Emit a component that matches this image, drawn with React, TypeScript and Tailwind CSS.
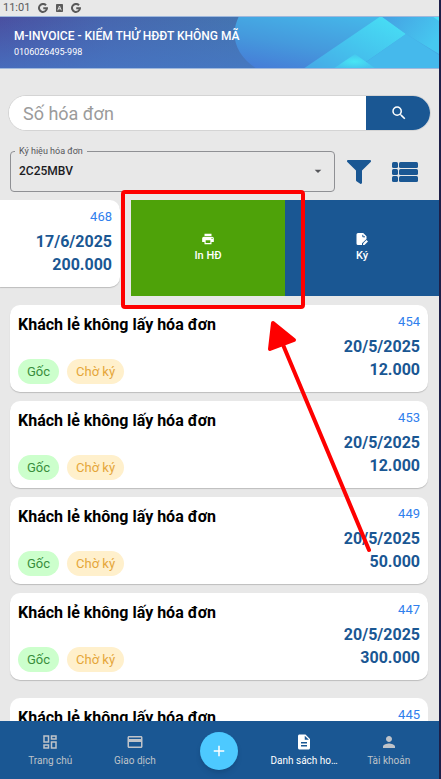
import React from 'react';
import { FaFilter } from 'react-icons/fa';
import {
  MdAdd,
  MdArrowDropDown,
  MdDescription,
  MdOutlineDashboard,
  MdPayment,
  MdPerson,
  MdPrint,
  MdSearch,
} from 'react-icons/md';

type Invoice = { no: string; customer: string; date: string; amount: string };

const customer = 'Khách lẻ không lấy hóa đơn';

const invoices: Invoice[] = [
  { no: '454', customer, date: '20/5/2025', amount: '12.000' },
  { no: '453', customer, date: '20/5/2025', amount: '12.000' },
  { no: '449', customer, date: '20/5/2025', amount: '50.000' },
  { no: '447', customer, date: '20/5/2025', amount: '300.000' },
];

function GoogleMark() {
  return (
    <svg viewBox="0 0 20 20" className="size-[10px]" fill="none" stroke="#5a5a5a" strokeWidth="4" aria-hidden="true">
      <path d="M16 4.5A8 8 0 1 0 18 10.5H10.500" />
    </svg>
  );
}

function StatusBar() {
  return (
    <div className="flex h-4 shrink-0 items-center pl-[3px] text-[11px] leading-4 text-[#5a5a5a]">
      <span className="mr-2">11:01</span>
      <span className="flex items-center gap-2">
        <GoogleMark />
        <svg viewBox="0 0 14 16" className="h-2 w-[7px]" aria-hidden="true">
          <rect width="14" height="16" rx="1.500" fill="#5a5a5a" />
          <path d="M3.500 12.500 7 4l3.500 8.500M5 9.500h4" fill="none" stroke="#e8e8e8" strokeWidth="1.800" />
        </svg>
        <GoogleMark />
      </span>
    </div>
  );
}

function HeaderArt() {
  return (
    <svg viewBox="0 0 439 53" preserveAspectRatio="none" className="absolute inset-0 size-full" aria-hidden="true">
      <defs>
        <linearGradient id="base" x1="0" y1="0" x2="1" y2="0">
          <stop offset="0" stopColor="#4a4fa0" />
          <stop offset="0.250" stopColor="#4766ae" />
          <stop offset="0.550" stopColor="#4474b0" />
        </linearGradient>
        <linearGradient id="glow" x1="0" y1="0" x2="0" y2="1">
          <stop offset="0" stopColor="#4679c8" stopOpacity="0" />
          <stop offset="1" stopColor="#4679c8" stopOpacity="0.700" />
        </linearGradient>
        <linearGradient id="disc" x1="0" y1="1" x2="0.700" y2="0">
          <stop offset="0" stopColor="#4678d6" />
          <stop offset="0.450" stopColor="#459add" />
          <stop offset="1" stopColor="#45b9ea" />
        </linearGradient>
        <linearGradient id="beam" x1="0" y1="1" x2="1" y2="0">
          <stop offset="0" stopColor="#45a8e6" />
          <stop offset="0.500" stopColor="#45c6ee" />
          <stop offset="1" stopColor="#48e2f6" />
        </linearGradient>
        <linearGradient id="edge" x1="0" y1="0" x2="1" y2="0.500">
          <stop offset="0" stopColor="#459fe2" />
          <stop offset="1" stopColor="#46c8f0" />
        </linearGradient>
        <radialGradient id="peak">
          <stop offset="0" stopColor="#48e6f4" />
          <stop offset="1" stopColor="#45c4ee" />
        </radialGradient>
      </defs>
      <rect width="439" height="53" fill="url(#base)" />
      <rect width="280" height="53" fill="url(#glow)" />
      <path d="M239 0C230 18 234 38 257 53H439V0Z" fill="url(#disc)" />
      <path d="M303 53 381 0 406 18 356 53Z" fill="url(#beam)" />
      <path d="M381 0H439V38L406 18Z" fill="url(#edge)" />
      <path d="M406 18 439 39V53H356Z" fill="#45b9ec" />
      <path d="M432 0H439V5Z" fill="#48e2f6" />
      <path d="M333 53 355 38 376 53Z" fill="url(#peak)" />
      <path d="M0 0.500H439M0 52.500H439" stroke="#9fb8dc" strokeWidth="1" />
    </svg>
  );
}

function Header() {
  return (
    <header className="relative h-[53px] shrink-0">
      <HeaderArt />
      <div className="relative pt-3 pl-[14px] text-white">
        <h1 className="text-[12px] leading-4 font-medium">M-INVOICE - KIỂM THỬ HĐĐT KHÔNG MÃ</h1>
        <p className="text-[9px] leading-4">0106026495-998</p>
      </div>
    </header>
  );
}

function SearchBar() {
  return (
    <form className="mr-2 ml-2 flex h-9 shrink-0 overflow-hidden rounded-full border border-[#d4d4d4] bg-white" onSubmit={(e) => e.preventDefault()}>
      <input
        type="text"
        aria-label="Số hóa đơn"
        placeholder="Số hóa đơn"
        className="min-w-0 flex-1 bg-white pl-[14px] text-[18px] outline-none placeholder:text-[#9b9b9b]"
      />
      <button type="submit" aria-label="Tìm kiếm" className="-my-px -mr-px flex w-[65px] items-center justify-center bg-[#1a5793] text-white">
        <MdSearch className="size-[18px]" />
      </button>
    </form>
  );
}

function Filters() {
  return (
    <div className="mt-[15px] flex shrink-0 items-end pr-[21px] pl-[10px]">
      <fieldset className="relative h-[46px] min-w-0 flex-1 rounded-[4px] border border-[#8f9094] px-1">
        <legend className="px-1 text-[9px] leading-[10px] text-[#55565a]">
          <label htmlFor="series">Ký hiệu hóa đơn</label>
        </legend>
        <select
          id="series"
          defaultValue="2C25MBV"
          className="h-[30px] w-full appearance-none bg-transparent pl-1 text-[12px] font-medium text-[#1b1b1f] outline-none"
        >
          <option>2C25MBV</option>
        </select>
        <MdArrowDropDown className="pointer-events-none absolute top-[7px] right-2 size-4 text-[#55565a]" aria-hidden="true" />
      </fieldset>
      <button type="button" aria-label="Lọc" className="mb-2 ml-3 text-[#1a5793]">
        <FaFilter className="size-6" />
      </button>
      <button type="button" aria-label="Danh sách" className="mb-2 ml-[21px] text-[#1a5793]">
        <svg viewBox="0 0 26 24" className="h-6 w-[26px]" fill="currentColor" aria-hidden="true">
          <rect x="0" y="2" width="6" height="6" rx="1.500" />
          <rect x="0" y="9" width="6" height="6" rx="1.500" />
          <rect x="0" y="16" width="6" height="6" rx="1.500" />
          <rect x="7" y="2" width="19" height="6" rx="1.500" />
          <rect x="7" y="9" width="19" height="6" rx="1.500" />
          <rect x="7" y="16" width="19" height="6" rx="1.500" />
        </svg>
      </button>
    </div>
  );
}

function Figures({ no, date, amount }: { no: string; date: string; amount: string }) {
  return (
    <div className="shrink-0 text-right">
      <p className="text-[13px] leading-[18px] text-[#2f80ed]">{no}</p>
      <p className="mt-1 text-[16px] leading-[23px] font-bold text-[#1a5793]">{date}</p>
      <p className="text-[16px] leading-[23px] font-bold text-[#1a5793]">{amount}</p>
    </div>
  );
}

function SwipedInvoice() {
  return (
    <section className="relative mt-2 flex h-24 shrink-0">
      <article className="mr-[11px] flex h-[87px] min-w-0 flex-1 justify-end rounded-r-[10px] bg-white pt-2 pr-2 shadow-[0_1px_1px_#bdbdbd]">
        <Figures no="468" date="17/6/2025" amount="200.000" />
      </article>
      <button type="button" className="flex w-[154px] flex-col items-center justify-center gap-[2px] bg-[#4ea209] text-[11px] leading-4 font-medium text-white">
        <MdPrint className="size-[14px]" />
        In HĐ
      </button>
      <button type="button" className="flex w-[154px] flex-col items-center justify-center gap-[2px] bg-[#1a5793] text-[11px] leading-4 font-medium text-white">
        <svg viewBox="0 0 14 14" className="size-[14px]" aria-hidden="true">
          <path d="M3 1H8.200L11.500 4.300V7L7 11.200V13H3A1.500 1.500 0 0 1 1.500 11.500V2.500A1.500 1.500 0 0 1 3 1Z" fill="white" />
          <path d="M7.800 2.800V4.800H10" fill="none" stroke="#1a5793" strokeWidth="1" />
          <path d="M8 13v-1.500L11.500 8 13 9.500 9.500 13Z" fill="white" />
        </svg>
        Ký
      </button>
      <Callout />
    </section>
  );
}

function InvoiceCard({ invoice }: { invoice: Invoice }) {
  return (
    <article className="flex h-[87px] shrink-0 justify-between rounded-[10px] bg-white pt-2 pr-2 pl-2 shadow-[0_1px_1px_#bdbdbd]">
      <div>
        <h2 className="text-[16px] leading-6 font-bold text-black">{invoice.customer}</h2>
        <div className="mt-[22px] flex gap-2 text-[13px] leading-[25px]">
          <span className="rounded-full bg-[#ccffcc] px-[9px] text-[#388e3c]">Gốc</span>
          <span className="rounded-full bg-[#fff0cc] px-[9px] text-[#e5a63a]">Chờ ký</span>
        </div>
      </div>
      <Figures no={invoice.no} date={invoice.date} amount={invoice.amount} />
    </article>
  );
}

function NextInvoice() {
  return (
    <article className="mt-[18px] mr-[11px] ml-[10px] flex h-[87px] shrink-0 justify-between rounded-[10px] bg-white px-2 pt-2">
      <h2 className="text-[16px] leading-6 font-bold text-black">{customer}</h2>
      <p className="text-[13px] leading-[18px] text-[#2f80ed]">445</p>
    </article>
  );
}

function NavItem({ icon, label, active = false }: { icon: React.ReactNode; label: string; active?: boolean }) {
  return (
    <a
      href="#"
      aria-current={active ? 'page' : undefined}
      className={`flex min-w-0 flex-1 flex-col items-center gap-[2px] pt-3 text-[10px] leading-4 ${active ? 'text-white' : 'text-[#bfc3c9]'}`}
    >
      {icon}
      <span className="max-w-full truncate px-2">{label}</span>
    </a>
  );
}

function BottomNav() {
  return (
    <nav className="flex h-[58px] shrink-0 bg-[#1a5793] px-2">
      <NavItem icon={<MdOutlineDashboard className="size-[18px]" />} label="Trang chủ" />
      <NavItem icon={<MdPayment className="size-[18px]" />} label="Giao dịch" />
      <div className="flex min-w-0 flex-1 items-center justify-center pt-[2px]">
        <button type="button" aria-label="Thêm" className="flex size-[38px] items-center justify-center rounded-full bg-[#4dc9ff] text-white shadow-md">
          <MdAdd className="size-[18px]" />
        </button>
      </div>
      <NavItem icon={<MdDescription className="size-[18px]" />} label="Danh sách ho…" active />
      <NavItem icon={<MdPerson className="size-[18px]" />} label="Tài khoản" />
    </nav>
  );
}

function Callout() {
  return (
    <svg className="pointer-events-none absolute -top-[10px] right-[68px] z-10 h-[364px] w-[250px]" viewBox="0 0 250 364" aria-hidden="true">
      <rect x="2" y="2" width="180" height="115" rx="2" fill="none" stroke="#fe0000" strokeWidth="4" />
      <path d="M160 150 248 360" stroke="#fe0000" strokeWidth="4" strokeLinecap="round" />
      <path d="M152 133 173 150 149 159Z" fill="#fe0000" stroke="#fe0000" strokeWidth="4" strokeLinejoin="round" />
    </svg>
  );
}

export default function App() {
  return (
    <div className="flex h-screen flex-col overflow-hidden border-r-2 border-[#1d1f48] bg-[#e8e8e8] font-['Roboto',sans-serif]">
      <StatusBar />
      <Header />
      <main className="flex min-h-0 flex-1 flex-col overflow-hidden pt-[26px]">
        <SearchBar />
        <Filters />
        <SwipedInvoice />
        <div className="mt-[9px] flex shrink-0 flex-col gap-[9px] pr-[11px] pl-[10px]">
          {invoices.map((invoice) => (
            <InvoiceCard key={invoice.no} invoice={invoice} />
          ))}
        </div>
        <NextInvoice />
      </main>
      <BottomNav />
    </div>
  );
}
